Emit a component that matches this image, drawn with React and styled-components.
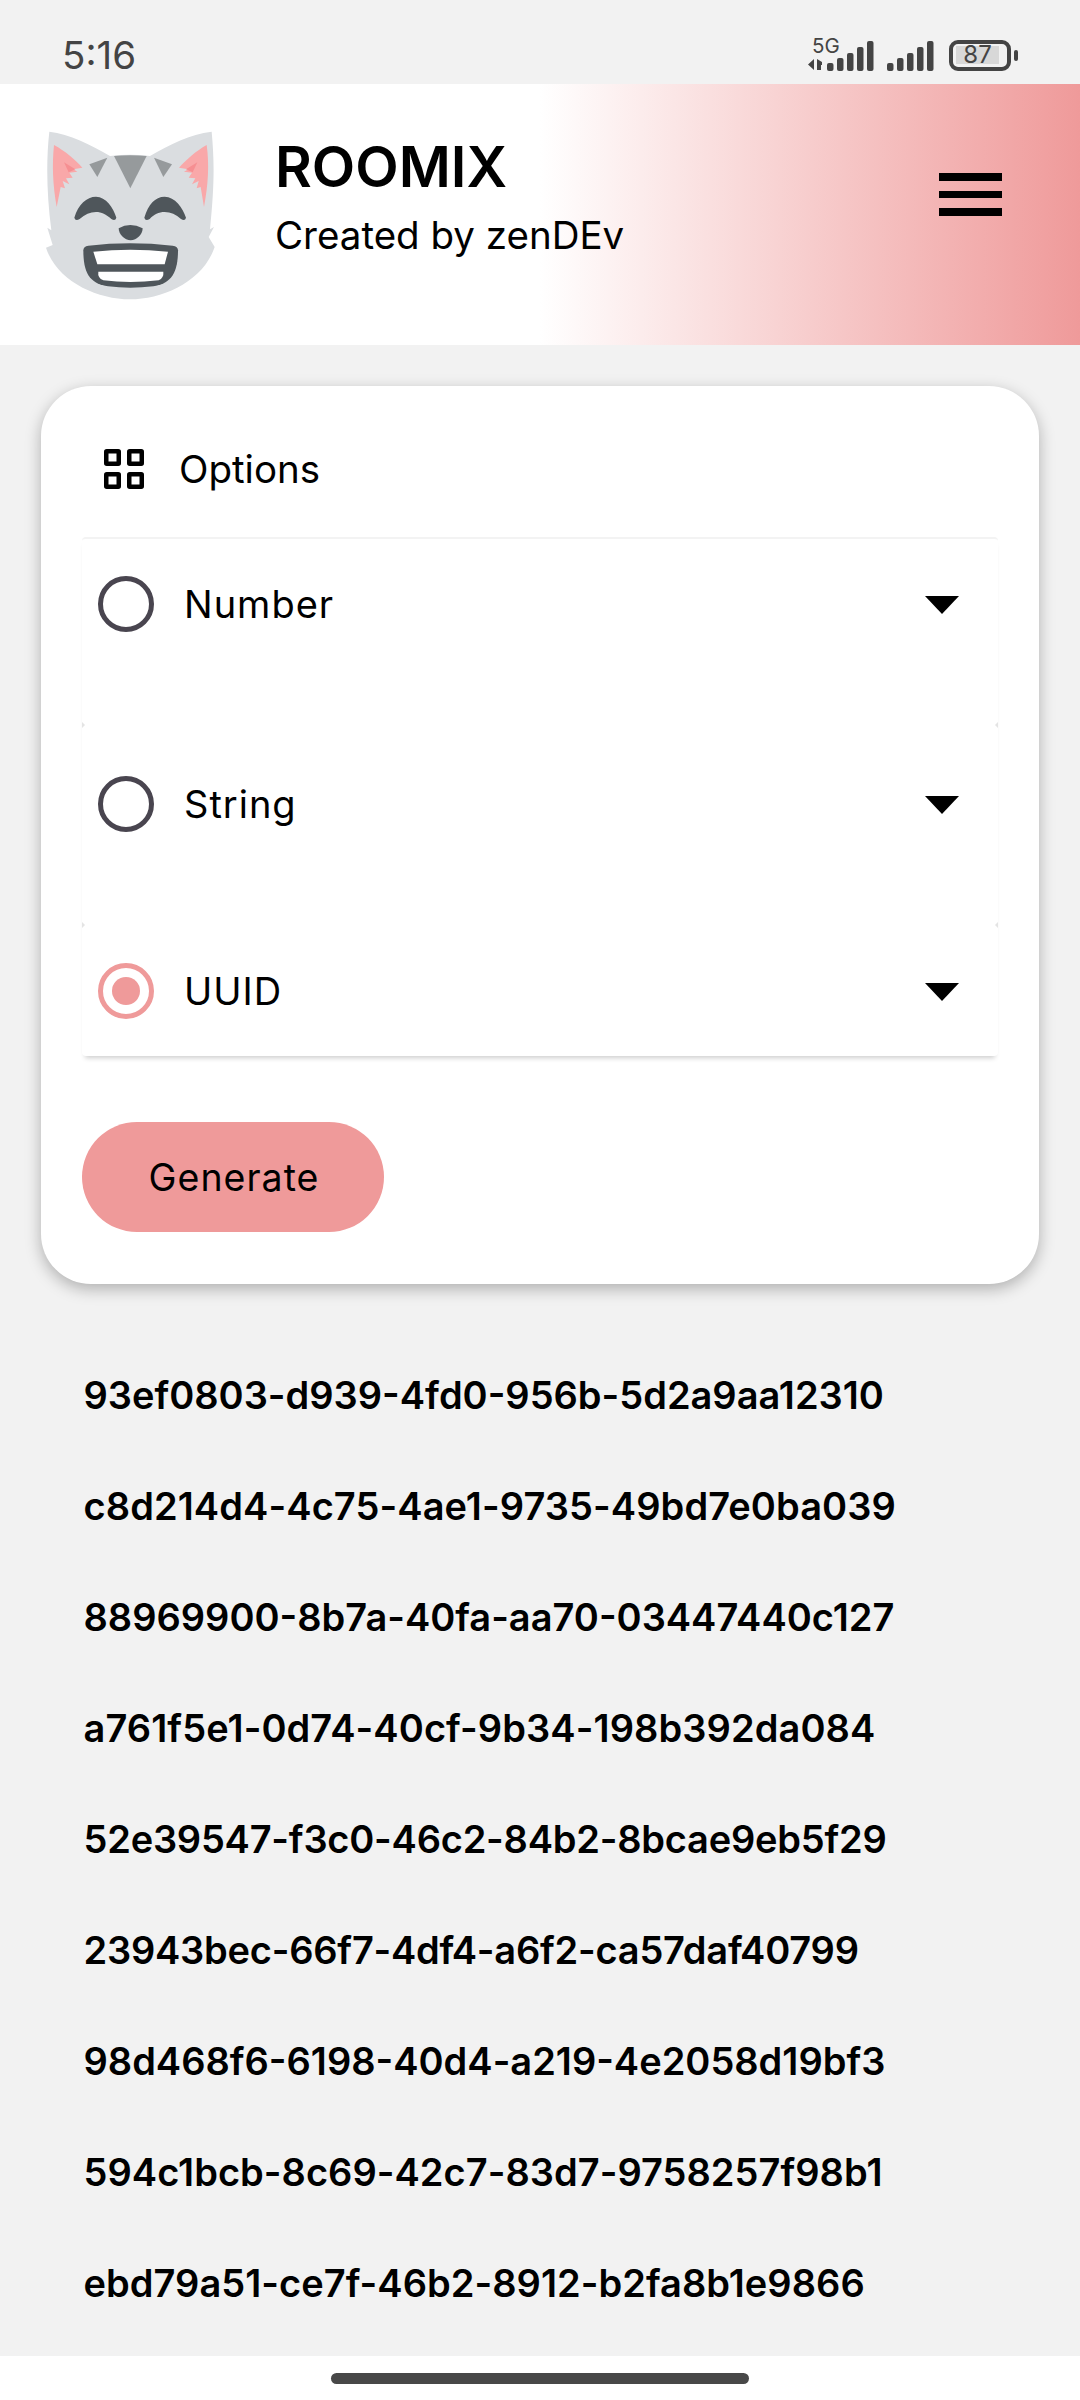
import React from 'react';
import styled, { createGlobalStyle } from 'styled-components';

const GlobalStyle = createGlobalStyle`
  html, body {
    margin: 0;
    padding: 0;
    background: #f2f2f2;
  }
  * {
    box-sizing: border-box;
  }
`;

const Page = styled.div`
  width: 1080px;
  height: 2400px;
  display: flex;
  flex-direction: column;
  overflow: hidden;
  background: #f2f2f2;
  font-family: Inter, 'Liberation Sans', sans-serif;
  color: #000;
`;

const StatusBar = styled.div`
  height: 84px;
  flex-shrink: 0;
  display: flex;
  align-items: flex-start;
  justify-content: space-between;
  padding: 32px 62px 0 62px;
`;

const Clock = styled.span`
  font-size: 38.5px;
  line-height: 46px;
  color: #444;
`;

const StatusIcons = styled.div`
  display: flex;
  align-items: center;
  height: 42px;
  margin-top: 2px;
`;

const SignalIcon = styled.svg`
  display: block;
  flex-shrink: 0;
  margin-left: ${p => p.$gap || 0}px;
`;

const Battery = styled.div`
  position: relative;
  width: 62px;
  height: 31px;
  margin-left: 14px;
  margin-right: 7px;
  border: 4px solid #444;
  border-radius: 9px;
  display: flex;
  align-items: center;
  justify-content: flex-start;
  padding-left: 3px;

  &::after {
    content: '';
    position: absolute;
    right: -11px;
    top: 6px;
    width: 4px;
    height: 11px;
    border-radius: 2px;
    background: #444;
  }
`;

const BatteryFill = styled.div`
  width: 43px;
  height: 18px;
  background: #d8d8d8;
  font-size: 24px;
  line-height: 18px;
  text-align: center;
  color: #444;
`;

const Header = styled.header`
  height: 261px;
  flex-shrink: 0;
  display: flex;
  align-items: center;
  background: linear-gradient(90deg, #fff 0, #fff 540px, #ef9a9a 1080px);
  padding: 0 78px 0 40px;
`;

const Logo = styled.svg`
  display: block;
  width: 200px;
  height: 220px;
  margin-top: -8px;
  flex-shrink: 0;
`;

const Titles = styled.div`
  margin-left: 35px;
  flex: 1;
  margin-top: -39px;
`;

const Title = styled.div`
  font-size: 56.5px;
  font-weight: 600;
  line-height: 68px;
  margin-bottom: 11px;
`;

const Subtitle = styled.div`
  font-size: 38.5px;
  line-height: 46px;
`;

const MenuButton = styled.div`
  width: 63px;
  display: flex;
  flex-direction: column;
  gap: 10px;
  margin-top: -40px;
`;

const MenuBar = styled.span`
  display: block;
  height: 7.5px;
  background: #000;
`;

const Card = styled.section`
  margin: 41px 41px 0;
  background: #fff;
  border-radius: 50px;
  padding: 0 41px;
  height: 898px;
  flex-shrink: 0;
  box-shadow: 0 5px 16px rgba(0, 0, 0, 0.28);
`;

const CardTitle = styled.div`
  height: 151px;
  display: flex;
  align-items: center;
  gap: 35px;
  padding: 14px 0 0 22px;
  font-size: 38.5px;
`;

const Sections = styled.div`
  border-top: 2px solid #f3f3f3;
  border-radius: 4px;
  box-shadow: 0 5px 5px -3px rgba(0, 0, 0, 0.2);
  background: #fff;
`;

const Section = styled.div`
  position: relative;
  height: ${p => p.$height}px;
  padding: ${p => p.$top}px 39px 0 16px;
  display: flex;
  align-items: flex-start;

  ${p => p.$notched && `
    &::before, &::after {
      content: '';
      position: absolute;
      top: -3px;
      border-top: 3px solid transparent;
      border-bottom: 3px solid transparent;
    }
    &::before {
      left: 0;
      border-left: 3px solid #e4e4e4;
    }
    &::after {
      right: 0;
      border-right: 3px solid #e4e4e4;
    }
  `}
`;

const Radio = styled.span`
  width: 56px;
  height: 56px;
  flex-shrink: 0;
  border-radius: 50%;
  border: 5px solid ${p => (p.$checked ? '#ef9a9a' : '#49454f')};
  display: flex;
  align-items: center;
  justify-content: center;

  &::after {
    content: '';
    display: ${p => (p.$checked ? 'block' : 'none')};
    width: 28px;
    height: 28px;
    border-radius: 50%;
    background: #ef9a9a;
  }
`;

const SectionLabel = styled.span`
  flex: 1;
  margin-left: 30px;
  font-size: 38px;
  line-height: 56px;
  letter-spacing: 1px;
`;

const Caret = styled.span`
  width: 0;
  height: 0;
  margin-top: 20px;
  border-left: 17.5px solid transparent;
  border-right: 17.5px solid transparent;
  border-top: 18px solid #000;
`;

const GenerateButton = styled.button`
  display: block;
  margin-top: 66px;
  width: 302px;
  height: 110px;
  border: 0;
  border-radius: 55px;
  background: #ef9a9a;
  font-family: inherit;
  font-size: 37.5px;
  letter-spacing: 1px;
  color: #000;
  padding: 0 0 0 2px;
`;

const IdList = styled.ul`
  list-style: none;
  margin: 55px 0 0;
  padding: 0 0 0 83.5px;
`;

const IdRow = styled.li`
  height: 111px;
  display: flex;
  align-items: center;
  font-size: 38px;
  font-weight: 600;
  letter-spacing: ${p => p.$spacing || 0}px;
`;

const NavBar = styled.div`
  margin-top: auto;
  height: 44px;
  flex-shrink: 0;
  background: #fff;
  display: flex;
  justify-content: center;
  padding-top: 17px;
`;

const NavPill = styled.div`
  width: 418px;
  height: 11px;
  border-radius: 6px;
  background: #484848;
`;

const ids = [
  { id: '93ef0803-d939-4fd0-956b-5d2a9aa12310' },
  { id: 'c8d214d4-4c75-4ae1-9735-49bd7e0ba039', spacing: 0.09 },
  { id: '88969900-8b7a-40fa-aa70-03447440c127' },
  { id: 'a761f5e1-0d74-40cf-9b34-198b392da084', spacing: 0.09 },
  { id: '52e39547-f3c0-46c2-84b2-8bcae9eb5f29', spacing: -0.22 },
  { id: '23943bec-66f7-4df4-a6f2-ca57daf40799', spacing: -0.22 },
  { id: '98d468f6-6198-40d4-a219-4e2058d19bf3' },
  { id: '594c1bcb-8c69-42c7-83d7-9758257f98b1', spacing: 0.04 },
  { id: 'ebd79a51-ce7f-46b2-8912-b2fa8b1e9866', spacing: 0.04 },
];

const options = [
  { label: 'Number', height: 186, top: 37 },
  { label: 'String', height: 200, top: 51, notched: true },
  { label: 'UUID', height: 131, top: 38, checked: true, notched: true },
];

const Bars = () => (
  <>
    {[8, 13, 18, 24, 30].map((h, i) => (
      <rect key={i} x={i * 10} y={30 - h} width="6.5" height={h} rx="2" fill="#444" />
    ))}
  </>
);

const MobileSignal = () => (
  <SignalIcon width="68" height="46" viewBox="0 -6 68 46">
    <text x="4" y="15" fontSize="20.5" fontFamily="Inter, sans-serif" fill="#444">5G</text>
    <path d="M6 21v11l-6-5.500zM9 21l5 3v3h-1v5h-4z" fill="#444" />
    <g transform="translate(19 3)">
      <Bars />
    </g>
  </SignalIcon>
);

const SimSignal = () => (
  <SignalIcon width="48" height="34" viewBox="0 0 48 34" $gap={11}>
    <g transform="translate(0 3)">
      <Bars />
    </g>
  </SignalIcon>
);

const CatLogo = () => (
  <Logo viewBox="0 0 600 660">
    <path
      d="M28 92C90 100 150 130 210 165Q270 158 330 165C390 130 450 100 515 92C522 170 525 240 510 385L522 378L506 408L524 438C490 540 370 595 270 595C170 595 50 540 18 440L38 432L22 380L34 388C20 280 18 180 28 92Z"
      fill="#dadde0"
    />
    <path
      d="M42 132C75 150 105 175 127 200L100 205L112 212L88 215L98 230L78 232L88 250L68 240L75 262L62 258L50 318C38 250 36 190 42 132Z"
      fill="#f9a8a9"
    />
    <path d="M72 184L106 205L86 214Z" fill="#f68f92" />
    <path
      d="M500 132C468 150 440 175 417 200L445 205L432 212L456 215L446 230L466 232L456 250L476 240L470 262L482 258L492 318C505 250 508 190 500 132Z"
      fill="#f9a8a9"
    />
    <path d="M472 184L438 205L458 214Z" fill="#f68f92" />
    <path d="M222 165Q270 160 320 165L271 262Z" fill="#969a9c" />
    <path d="M148 190L202 170L172 228Z" fill="#969a9c" />
    <path d="M342 170L396 190L370 228Z" fill="#969a9c" />
    <path
      d="M103 350C115 310 140 287 168 287C198 287 220 320 229 350Q226 362 214 354C198 340 185 333 168 333C150 333 135 340 119 354Q106 362 103 350Z"
      fill="#4f565b"
    />
    <path
      d="M313 350C325 310 345 287 374 287C405 287 428 320 438 350Q435 362 423 354C408 340 392 333 374 333C356 333 342 340 329 354Q316 362 313 350Z"
      fill="#4f565b"
    />
    <path d="M236 382Q270 362 308 382C308 400 290 418 272 418C254 418 236 400 236 382Z" fill="#4f565b" />
    <path
      d="M130 448Q130 436 145 434Q270 420 398 434Q414 436 414 448C414 520 390 548 340 556Q270 564 204 556C152 548 130 520 130 448Z"
      fill="#4f565b"
    />
    <path d="M160 452Q270 440 384 452L374 490L172 490Z" fill="#fff" />
    <path d="M175 512L370 512Q372 530 356 538Q270 548 190 538Q172 530 175 512Z" fill="#fff" />
  </Logo>
);

const GridIcon = () => (
  <svg width="40" height="40" viewBox="0 0 40 40" fill="none" stroke="#000" strokeWidth="4.500">
    <rect x="2.250" y="2.250" width="12.500" height="12.500" rx="0.500" />
    <rect x="25.250" y="2.250" width="12.500" height="12.500" rx="0.500" />
    <rect x="2.250" y="25.250" width="12.500" height="12.500" rx="0.500" />
    <rect x="25.250" y="25.250" width="12.500" height="12.500" rx="0.500" />
  </svg>
);

export default function App() {
  return (
    <Page>
      <GlobalStyle />
      <StatusBar>
        <Clock>5:16</Clock>
        <StatusIcons>
          <MobileSignal />
          <SimSignal />
          <Battery>
            <BatteryFill>87</BatteryFill>
          </Battery>
        </StatusIcons>
      </StatusBar>
      <Header>
        <CatLogo />
        <Titles>
          <Title>ROOMIX</Title>
          <Subtitle>Created by zenDEv</Subtitle>
        </Titles>
        <MenuButton>
          <MenuBar />
          <MenuBar />
          <MenuBar />
        </MenuButton>
      </Header>
      <Card>
        <CardTitle>
          <GridIcon />
          Options
        </CardTitle>
        <Sections>
          {options.map(o => (
            <Section key={o.label} $height={o.height} $top={o.top} $notched={o.notched}>
              <Radio $checked={o.checked} />
              <SectionLabel>{o.label}</SectionLabel>
              <Caret />
            </Section>
          ))}
        </Sections>
        <GenerateButton>Generate</GenerateButton>
      </Card>
      <IdList>
        {ids.map(row => (
          <IdRow key={row.id} $spacing={row.spacing}>{row.id}</IdRow>
        ))}
      </IdList>
      <NavBar>
        <NavPill />
      </NavBar>
    </Page>
  );
}
